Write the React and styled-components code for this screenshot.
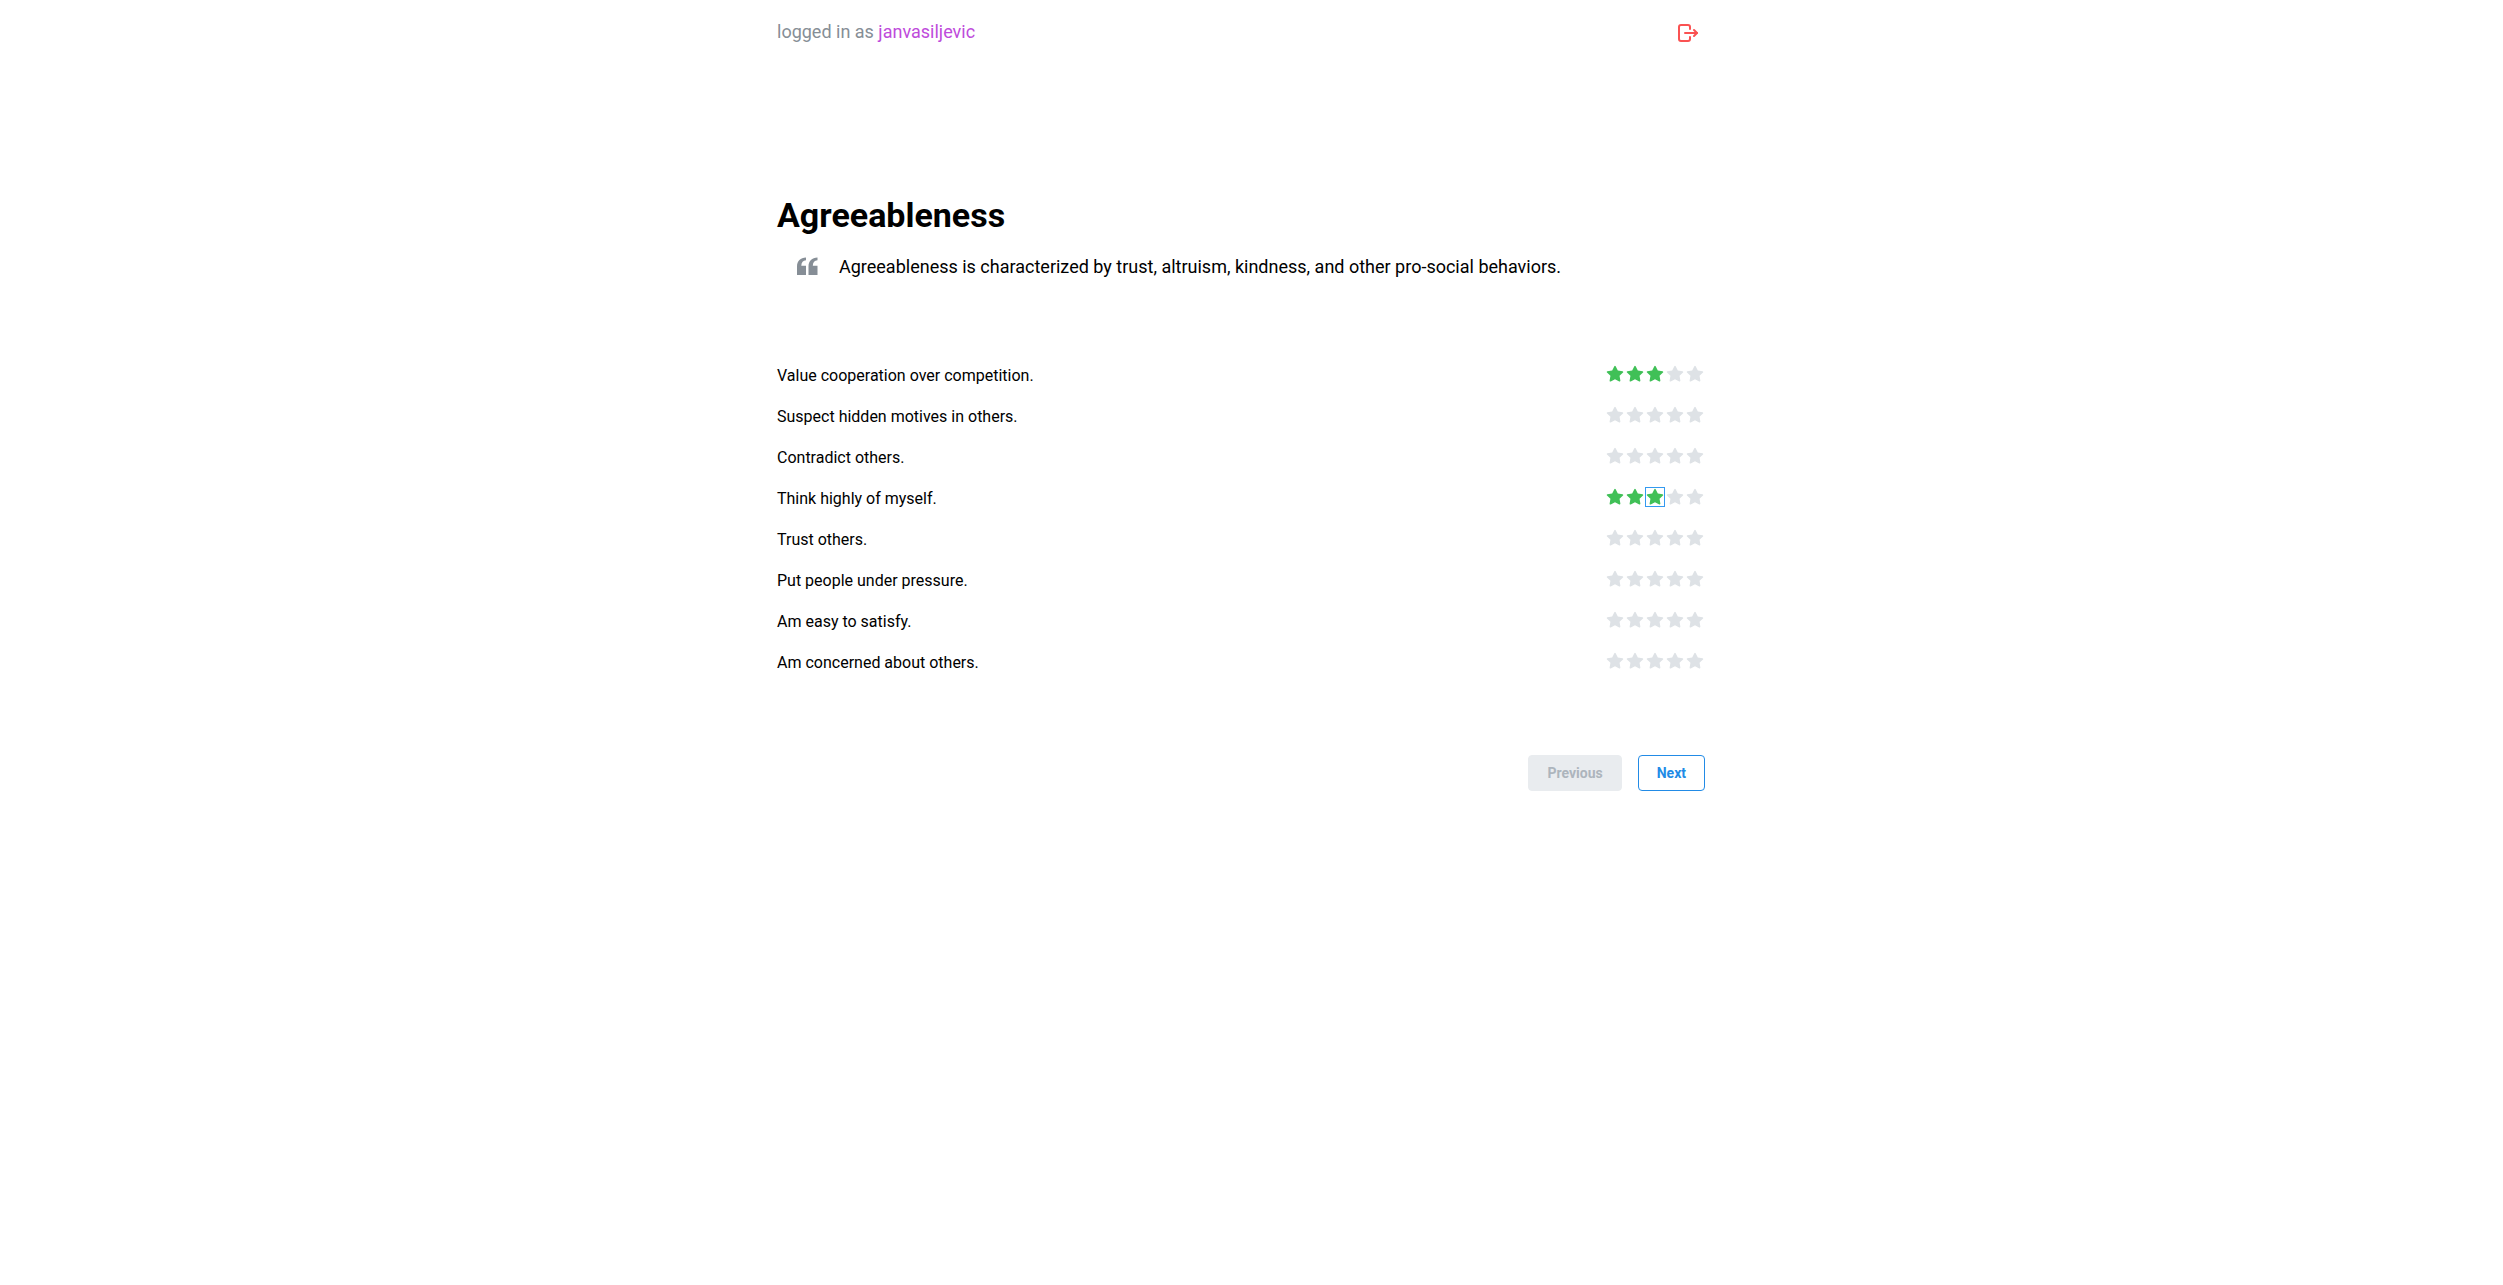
import React, { useState } from "react";
import styled, { createGlobalStyle } from "styled-components";

const GlobalStyle = createGlobalStyle`
  *, *::before, *::after { box-sizing: border-box; }
  body {
    margin: 0;
    padding-right: 21px;
    background: #fff;
    color: #000;
    font-family: Roboto, "Liberation Sans", sans-serif;
    font-size: 16px;
    line-height: 25px;
  }
`;

const Container = styled.div`
  max-width: 960px;
  margin: 0 auto;
  padding: 16px;
`;

const Header = styled.header`
  display: flex;
  align-items: flex-start;
  justify-content: space-between;
  margin-bottom: 144px;
`;

const LoginStatus = styled.p`
  margin: 0;
  font-size: 18px;
  line-height: 32px;
  color: #868e96;
`;

const UserName = styled.span`
  color: #be4bdb;
`;

const IconButton = styled.button`
  display: flex;
  align-items: center;
  justify-content: center;
  width: 34px;
  height: 34px;
  padding: 0;
  border: 0;
  border-radius: 4px;
  background: transparent;
  color: #fa5252;
  cursor: pointer;
`;

const Title = styled.h1`
  margin: 0;
  font-size: 34px;
  line-height: 42px;
  font-weight: 700;
`;

const Quote = styled.blockquote`
  display: flex;
  align-items: center;
  gap: 20px;
  margin: 0;
  padding: 16px 20px;
  font-size: 18px;
  line-height: 30px;
`;

const QuoteMark = styled.svg`
  flex: none;
  width: 22px;
  height: 22px;
  color: #868e96;
`;

const Questions = styled.div`
  display: flex;
  flex-direction: column;
  gap: 16px;
  padding: 65px 0 80px;
`;

const Question = styled.fieldset`
  display: flex;
  align-items: flex-start;
  justify-content: space-between;
  min-width: 0;
  margin: 0;
  padding: 0;
  border: 0;
`;

const Stars = styled.div`
  display: flex;
  padding-top: 1px;
`;

const StarLabel = styled.label`
  display: flex;
  align-items: center;
  justify-content: center;
  width: 20px;
  height: 20px;
  color: ${(p) => (p.$filled ? "#40c057" : "#dee2e6")};
  outline: ${(p) => (p.$focused ? "1px solid #339af0" : "none")};
  outline-offset: -1px;
  cursor: pointer;
`;

const StarInput = styled.input`
  position: absolute;
  width: 1px;
  height: 1px;
  margin: 0;
  opacity: 0;
`;

const Actions = styled.div`
  display: flex;
  justify-content: flex-end;
  gap: 16px;
`;

const Button = styled.button`
  height: 36px;
  padding: 0 18px;
  border: 1px solid #228be6;
  border-radius: 4px;
  background: #fff;
  color: #228be6;
  font-family: inherit;
  font-size: 14px;
  font-weight: 700;
  line-height: 20px;
  cursor: pointer;

  &:disabled {
    border-color: #e9ecef;
    background: #e9ecef;
    color: #adb5bd;
    cursor: default;
  }
`;

const LogoutIcon = () => (
  <svg width="24" height="24" viewBox="0 0 24 24" fill="none" stroke="currentColor" strokeWidth="2" strokeLinecap="round" strokeLinejoin="round" aria-hidden="true">
    <path d="M14 8v-2a2 2 0 0 0 -2 -2h-7a2 2 0 0 0 -2 2v12a2 2 0 0 0 2 2h7a2 2 0 0 0 2 -2v-2" />
    <path d="M9 12h12l-3 -3" />
    <path d="M18 15l3 -3" />
  </svg>
);

const StarIcon = () => (
  <svg width="18" height="18" viewBox="0 0 24 24" fill="currentColor" aria-hidden="true">
    <path d="M8.243 7.34l-6.38 .925l-.113 .023a1 1 0 0 0 -.44 1.684l4.622 4.499l-1.09 6.355l-.013 .11a1 1 0 0 0 1.464 .944l5.706 -3l5.693 3l.1 .046a1 1 0 0 0 1.352 -1.1l-1.091 -6.355l4.624 -4.5l.078 -.085a1 1 0 0 0 -.633 -1.62l-6.38 -.926l-2.852 -5.78a1 1 0 0 0 -1.794 0l-2.853 5.78z" />
  </svg>
);

const QUESTIONS = [
  "Value cooperation over competition.",
  "Suspect hidden motives in others.",
  "Contradict others.",
  "Think highly of myself.",
  "Trust others.",
  "Put people under pressure.",
  "Am easy to satisfy.",
  "Am concerned about others.",
];

export default function App() {
  const [ratings, setRatings] = useState([3, 0, 0, 3, 0, 0, 0, 0]);
  const [active, setActive] = useState(3);

  const rate = (index, value) => {
    setRatings(ratings.map((r, i) => (i === index ? value : r)));
    setActive(index);
  };

  return (
    <>
      <GlobalStyle />
      <Container>
        <Header>
          <LoginStatus>
            logged in as <UserName>janvasiljevic</UserName>
          </LoginStatus>
          <IconButton type="button" aria-label="Log out">
            <LogoutIcon />
          </IconButton>
        </Header>
        <main>
          <Title>Agreeableness</Title>
          <Quote>
            <QuoteMark viewBox="0 0 22 22" fill="currentColor" aria-hidden="true">
              <path d="M9 1.500v2.700C6 4.500 4.400 6.300 4.300 9.700H9V19H0v-8.500C0 5 3.500 1.700 9 1.500zM20.500 1.500v2.700c-3 .3-4.600 2.100-4.700 5.500h4.700V19h-9v-8.500c0-5.500 3.500-8.800 9-9z" />
            </QuoteMark>
            <span>Agreeableness is characterized by trust, altruism, kindness, and other pro-social behaviors.</span>
          </Quote>
          <Questions>
            {QUESTIONS.map((text, i) => (
              <Question key={text} aria-label={text}>
                <span>{text}</span>
                <Stars>
                  {[1, 2, 3, 4, 5].map((value) => (
                    <StarLabel
                      key={value}
                      $filled={value <= ratings[i]}
                      $focused={i === active && value === ratings[i]}
                    >
                      <StarInput
                        type="radio"
                        name={`question-${i}`}
                        aria-label={`${value} of 5`}
                        checked={ratings[i] === value}
                        onChange={() => rate(i, value)}
                      />
                      <StarIcon />
                    </StarLabel>
                  ))}
                </Stars>
              </Question>
            ))}
          </Questions>
          <Actions>
            <Button type="button" disabled>
              Previous
            </Button>
            <Button type="button">Next</Button>
          </Actions>
        </main>
      </Container>
    </>
  );
}
